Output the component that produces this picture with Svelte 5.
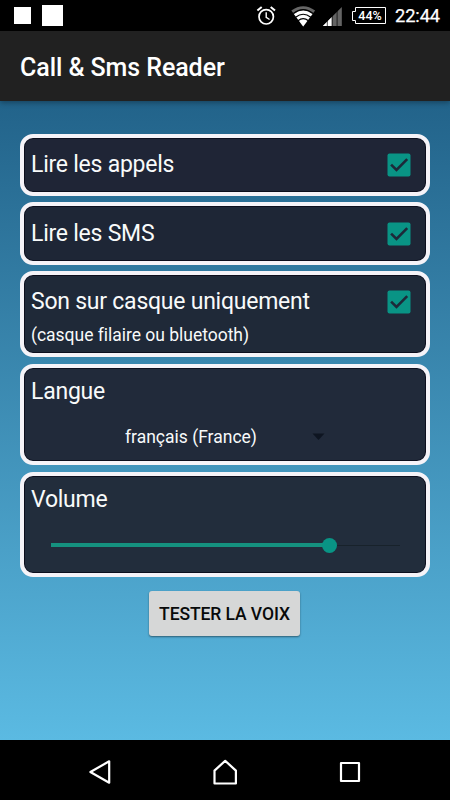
<script>
  let calls = $state(true);
  let sms = $state(true);
  let headset = $state(true);
  const volume = 79.7;
</script>

{#snippet check(on, toggle, label)}
  <button class="check" role="checkbox" aria-checked={on} aria-label={label} onclick={toggle}>
    <svg width="24" height="24" viewBox="0 0 24 24">
      {#if on}
        <rect x="0.5" y="0.5" width="23" height="23" rx="2" fill="#099485" />
        <path d="M4.1 11.6L9.5 17L20.2 6.2" fill="none" stroke="#1d2939" stroke-width="2.6" />
      {:else}
        <rect x="1.5" y="1.5" width="21" height="21" rx="2" fill="none" stroke="#099485" stroke-width="2" />
      {/if}
    </svg>
  </button>
{/snippet}

<div class="screen">
  <div class="status">
    <i class="sq small"></i>
    <i class="sq big"></i>
    <svg class="icons" width="132" height="31" viewBox="255 0 132 31">
      <g fill="none" stroke="#fff" stroke-width="1.7">
        <circle cx="266.2" cy="16.8" r="7.2" />
        <path d="M266.2 12.3v5l3.4 2.2" stroke-width="1.4" />
        <path d="M257.4 10.6l4.3-3.6M275 10.6l-4.3-3.6" stroke-width="2" />
      </g>
      <path d="M303.2 26.5L291.3 10.6Q303.2 1.8 315.1 10.6Z" fill="#666" />
      <path d="M303.2 26.5L293.9 14Q303.2 7.1 312.5 14Z" fill="#fff" />
      <g fill="none" stroke="#000" stroke-width="1.2">
        <path d="M293.3 13.4Q303.2 5.8 313.1 13.4" />
        <path d="M295.6 17.3Q303.2 11.2 310.8 17.3" />
        <path d="M298 20.8Q303.2 16.4 308.4 20.8" />
      </g>
      <path d="M341.8 7V26H322.8Z" fill="#646464" />
      <path d="M331.8 17V26H322.8Z" fill="#fff" />
      <path d="M327.3 18v8M332.2 14v12M337.1 10v16" stroke="#000" stroke-width="0.7" />
      <path d="M355.5 7.5H385.5V23.5H355.5V20.5H352.5V11.5H355.5Z" fill="none" stroke="#fff" stroke-width="1" />
      <text x="358.3" y="20" class="pct" textLength="23.5" lengthAdjust="spacingAndGlyphs">44%</text>
    </svg>
    <span class="clock">22:44</span>
  </div>

  <header><h1>Call &amp; Sms Reader</h1></header>

  <main>
    <section class="card c1">
      <div class="row"><h2>Lire les appels</h2>{@render check(calls, () => (calls = !calls), 'Lire les appels')}</div>
    </section>
    <section class="card c2">
      <div class="row"><h2>Lire les SMS</h2>{@render check(sms, () => (sms = !sms), 'Lire les SMS')}</div>
    </section>
    <section class="card c3">
      <div class="row"><h2>Son sur casque uniquement</h2>{@render check(headset, () => (headset = !headset), 'Son sur casque uniquement')}</div>
      <p class="hint">(casque filaire ou bluetooth)</p>
    </section>
    <section class="card c4">
      <h2>Langue</h2>
      <div class="spinner"><span>français (France)</span>
        <svg width="13" height="8" viewBox="0 0 13 8"><path d="M0.5 0.5H12.5L6.5 6.9Z" fill="#0e1521" /></svg>
      </div>
    </section>
    <section class="card c5">
      <h2>Volume</h2>
      <div class="slider">
        <i class="fill" style:width="{volume}%"></i><i class="thumb"></i><i class="rest"></i>
      </div>
    </section>
    <button class="test">TESTER LA VOIX</button>
  </main>

  <nav>
    <svg width="24" height="26" viewBox="0 0 24 26"><path d="M21.2 2.3V23.7L2.4 13Z" /></svg>
    <svg width="26" height="28" viewBox="0 0 26 28"><path d="M1.5 25.5V12.6L12.2 2.8L22.9 12.6V25.5Z" /></svg>
    <svg width="22" height="22" viewBox="0 0 22 22"><path d="M2 2H20V20H2Z" /></svg>
  </nav>
</div>

<style>
  :global(body) { margin: 0; background: #000; }
  .screen {
    width: 450px; height: 800px; overflow: hidden;
    display: flex; flex-direction: column;
    font-family: Roboto, sans-serif; color: #f8fafa;
  }
  .status { height: 31px; flex: none; background: #000; display: flex; align-items: center; box-sizing: border-box; padding-left: 14px; }
  .sq { background: #fff; display: block; flex: none; }
  .small { width: 17px; height: 17px; }
  .big { width: 21px; height: 21px; margin-left: 11px; }
  .icons { margin-left: 192px; flex: none; }
  .pct { font: 500 12.5px Roboto, sans-serif; fill: #fff; }
  .clock { font-size: 18.3px; font-weight: 400; margin-left: 8px; line-height: 31px; color: #fff; letter-spacing: -0.1px; -webkit-text-stroke: 0.25px #fff; }
  header {
    height: 70px; flex: none; background: #212121; display: flex; align-items: center;
    padding: 4px 0 0 20px; box-sizing: border-box; z-index: 1; box-shadow: 0 2px 5px rgba(0, 0, 0, 0.3);
  }
  h1 { margin: 0; font-size: 25px; font-weight: 500; line-height: 30px; letter-spacing: -0.07px; color: #fff; white-space: nowrap; }
  main {
    flex: 1; box-sizing: border-box; padding: 33px 20px 0;
    display: flex; flex-direction: column; align-items: stretch;
    background: linear-gradient(#22638a, #5bbae2);
  }
  .card {
    box-sizing: border-box; flex: none; border: 4px solid #f5f3f8; border-radius: 13px;
    padding: 9px 15px 0 7px; margin-bottom: 7px;
    background: #1f2536; box-shadow: inset 0 0 0 1px #0c0e1d;
  }
  .c1 { height: 62px; padding-top: 12px; margin-bottom: 6px; }
  .c2 { height: 63px; background: #1e2636; padding-top: 13px; margin-bottom: 6px; }
  .c3 { height: 86px; background: #1f2938; padding-top: 12px; }
  .c4 { height: 101px; background: #212a3a; }
  .c5 { height: 105px; background: #222d3c; margin-bottom: 0; }
  .row { display: flex; justify-content: space-between; height: 29px; align-items: center; }
  h2 { margin: 0; font-size: 23px; font-weight: 400; line-height: 29px; letter-spacing: -0.24px; white-space: nowrap; }
  .check { border: 0; padding: 0; background: none; width: 24px; height: 24px; margin-top: 1px; }
  .check svg { display: block; }
  .hint { margin: 8px 0 0; font-size: 17.5px; line-height: 22px; letter-spacing: -0.02px; }
  .spinner { display: flex; align-items: center; margin: 20px 0 0 94px; font-size: 17.5px; line-height: 22px; }
  .spinner span { width: 187px; }
  .spinner svg { margin-top: -1px; }
  .slider { display: flex; align-items: center; height: 16px; margin: 23px 11px 0 20px; }
  .slider .fill { height: 4px; background: #15917f; }
  .slider .thumb { width: 15px; height: 15px; border-radius: 50%; background: #099485; margin: 0 -7.5px; flex: none; z-index: 1; }
  .slider .rest { height: 1px; background: #18222b; flex: 1; }
  .test {
    align-self: center; width: 151px; height: 45px; margin: 14px 1px 0 0; padding: 0; border: 0; border-radius: 3px;
    background: #d6d7d7; color: #080a0a; font: 500 17.5px Roboto, sans-serif; letter-spacing: -0.08px; white-space: nowrap;
    box-shadow: 0 1px 2px rgba(0, 0, 0, 0.45);
  }
  nav { height: 60px; flex: none; background: #000; display: flex; align-items: center; padding: 4px 89px 0 88px; justify-content: space-between; box-sizing: border-box; }
  nav svg { fill: none; stroke: #fff; stroke-width: 2.2; stroke-linejoin: round; }
</style>
